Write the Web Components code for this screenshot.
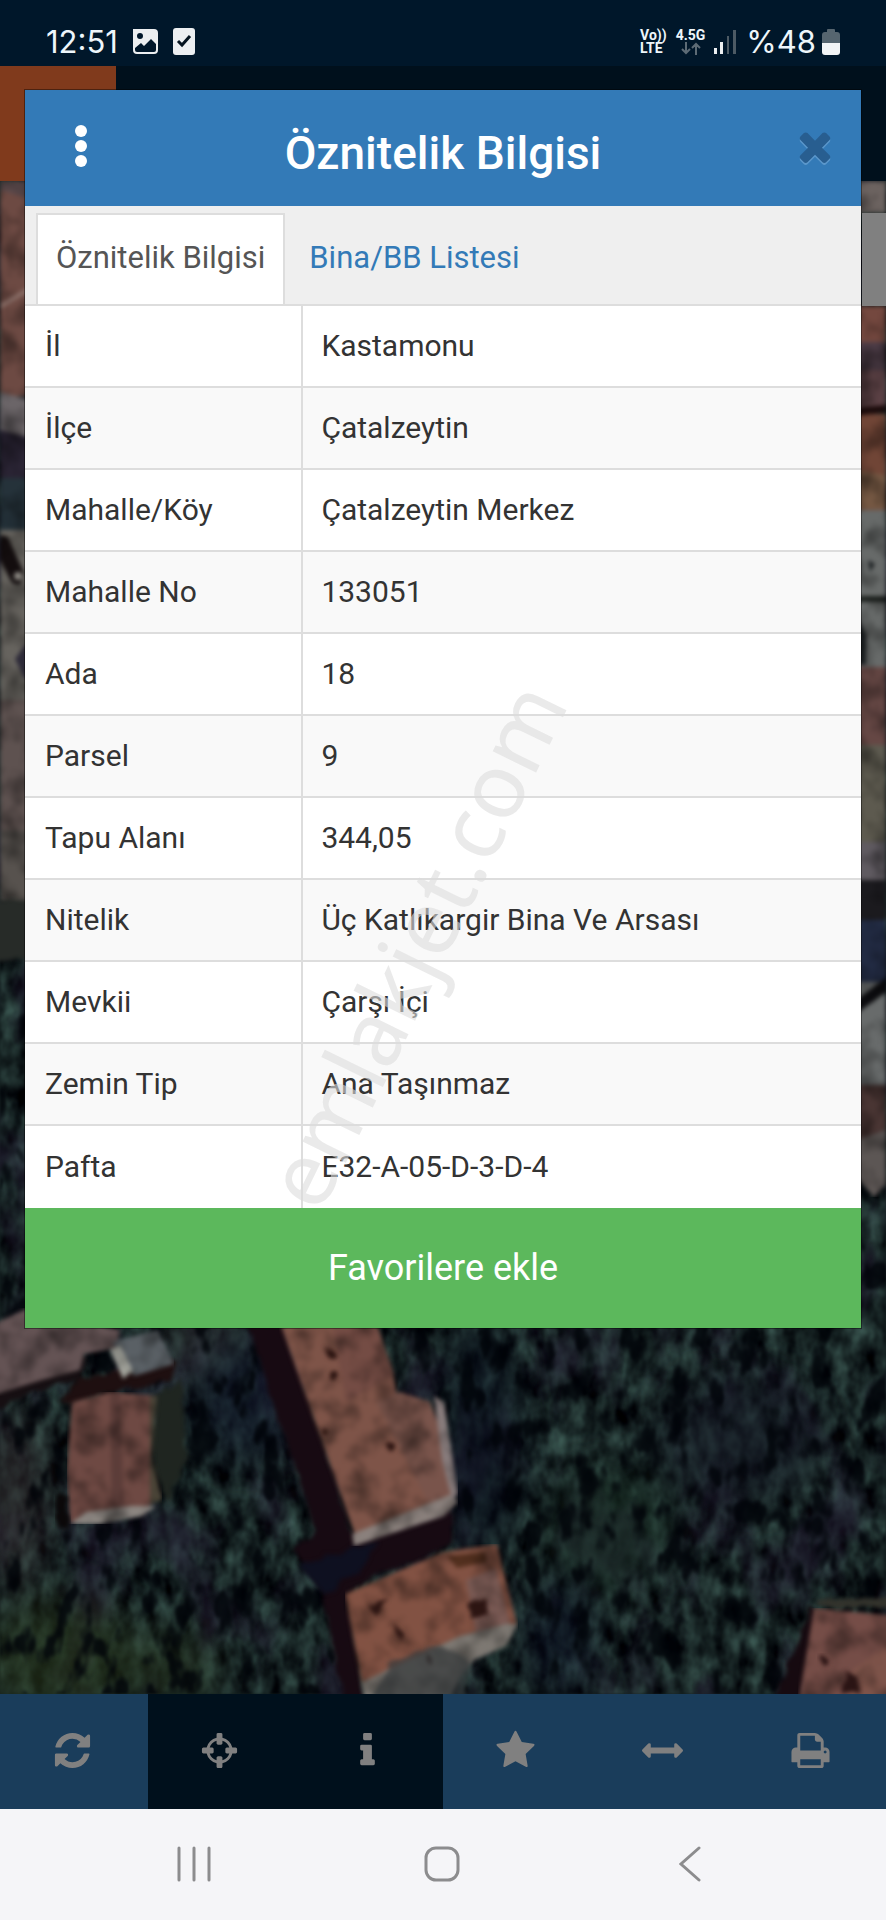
<!DOCTYPE html>
<html lang="tr">
<head>
<meta charset="utf-8">
<meta name="viewport" content="width=device-width, initial-scale=1">
<title>Öznitelik Bilgisi</title>
<style>
  body {
    margin: 0;
    font-family: Roboto, "Liberation Sans", sans-serif;
    background: #00101c;
  }
</style>
</head>
<body>
<parcel-app></parcel-app>

<script>
(function() {
  // 1792 unit glyph grid
  const ICONS = {
    refresh: 'M1639 1056q0 5-1 7-64 268-268 434.5t-478 166.5q-146 0-282.5-55t-243.5-157l-129 129q-19 19-45 19t-45-19-19-45v-448q0-26 19-45t45-19h448q26 0 45 19t19 45-19 45l-137 137q71 66 161 102t187 36q134 0 250-65t186-179q11-17 53-117 8-23 30-23h192q13 0 22.5 9.5t9.5 22.5zm25-800v448q0 26-19 45t-45 19h-448q-26 0-45-19t-19-45 19-45l138-138q-148-137-349-137-134 0-250 65t-186 179q-11 17-53 117-8 23-30 23h-199q-13 0-22.5-9.5t-9.5-22.5v-7q65-268 270-434.5t480-166.5q146 0 284 55.5t245 156.5l130-129q19-19 45-19t45 19 19 45z',
    locate: 'M1325 1024h-109q-26 0-45-19t-19-45v-128q0-26 19-45t45-19h109q-32-108-112.5-188.5t-188.5-112.5v109q0 26-19 45t-45 19h-128q-26 0-45-19t-19-45v-109q-108 32-188.5 112.5t-112.5 188.5h109q26 0 45 19t19 45v128q0 26-19 45t-45 19h-109q32 108 112.5 188.5t188.5 112.5v-109q0-26 19-45t45-19h128q26 0 45 19t19 45v109q108-32 188.5-112.5t112.5-188.5zm339-192v128q0 26-19 45t-45 19h-143q-37 161-154.5 278.5t-278.5 154.5v143q0 26-19 45t-45 19h-128q-26 0-45-19t-19-45v-143q-161-37-278.5-154.5t-154.5-278.5h-143q-26 0-45-19t-19-45v-128q0-26 19-45t45-19h143q37-161 154.5-278.5t278.5-154.5v-143q0-26 19-45t45-19h128q26 0 45 19t19 45v143q161 37 278.5 154.5t154.5 278.5h143q26 0 45 19t19 45z',
    info: 'M1216 1344v128q0 26-19 45t-45 19h-512q-26 0-45-19t-19-45v-128q0-26 19-45t45-19h64v-384h-64q-26 0-45-19t-19-45v-128q0-26 19-45t45-19h384q26 0 45 19t19 45v576h64q26 0 45 19t19 45zm-128-1152v192q0 26-19 45t-45 19h-256q-26 0-45-19t-19-45v-192q0-26 19-45t45-19h256q26 0 45 19t19 45z',
    star: 'M1728 647q0 22-26 48l-363 354 86 500q1 7 1 20 0 21-10.5 35.5t-30.5 14.5q-19 0-40-12l-449-236-449 236q-22 12-40 12-21 0-31.5-14.5t-10.5-35.5q0-6 2-20l86-500-364-354q-25-27-25-48 0-37 56-46l502-73 225-455q19-41 49-41t49 41l225 455 502 73q56 9 56 46z',
    measure: 'M1792 896q0 26-19 45l-256 256q-19 19-45 19t-45-19-19-45v-128h-1024v128q0 26-19 45t-45 19-45-19l-256-256q-19-19-19-45t19-45l256-256q19-19 45-19t45 19 19 45v128h1024v-128q0-26 19-45t45-19 45 19l256 256q19 19 19 45z',
    print: 'M448 1536h896v-256h-896v256zm0-640h896v-384h-160q-40 0-68-28t-28-68v-160h-640v640zm1152 64q0-26-19-45t-45-19-45 19-19 45 19 45 45 19 45-19 19-45zm128 0v416q0 13-9.5 22.5t-22.5 9.5h-224v160q0 40-28 68t-68 28h-960q-40 0-68-28t-28-68v-160h-224q-13 0-22.5-9.5t-9.5-22.5v-416q0-79 56.5-135.5t135.5-56.5h64v-544q0-40 28-68t68-28h672q40 0 88 20t76 48l152 152q28 28 48 76t20 88v256h64q79 0 135.5 56.5t56.5 135.5z',
    times: 'M1490 1322q0 40-28 68l-136 136q-28 28-68 28t-68-28l-294-294-294 294q-28 28-68 28t-68-28l-136-136q-28-28-28-68t28-68l294-294-294-294q-28-28-28-68t28-68l136-136q28-28 68-28t68 28l294 294 294-294q28-28 68-28t68 28l136 136q28 28 28 68t-28 68l-294 294 294 294q28 28 28 68z'
  };

  const ROWS = [
    ['İl', 'Kastamonu'],
    ['İlçe', 'Çatalzeytin'],
    ['Mahalle/Köy', 'Çatalzeytin Merkez'],
    ['Mahalle No', '133051'],
    ['Ada', '18'],
    ['Parsel', '9'],
    ['Tapu Alanı', '344,05'],
    ['Nitelik', 'Üç Katlıkargir Bina Ve Arsası'],
    ['Mevkii', 'Çarşı İçi'],
    ['Zemin Tip', 'Ana Taşınmaz'],
    ['Pafta', 'E32-A-05-D-3-D-4']
  ];

  class BaseElement extends HTMLElement {
    constructor() {
      super();
      this.attachShadow({mode: 'open'});
    }
    connectedCallback() {
      this.shadowRoot.innerHTML = this.template;
    }
  }

  class GlyphIcon extends BaseElement {
    get template() {
      return `
<style>
  :host { display: block; width: 41px; height: 41px; }
  svg { display: block; width: 100%; height: 100%; fill: currentColor; }
</style>
<svg viewBox="0 0 1792 1792" aria-hidden="true"><path d="${ICONS[this.getAttribute('name')]}"/></svg>`
    }
  }
  customElements.define('glyph-icon', GlyphIcon);

  class StatusBar extends BaseElement {
    get template() {
      return `
<style>
  :host {
    display: flex;
    align-items: center;
    box-sizing: border-box;
    height: 66px;
    padding: 18px 46px 0 46px;
    background: #00172a;
    color: #eef6fb;
  }
  .clock, .level { font: 400 31px/36px Inter, Roboto, sans-serif; }
  .clock { margin-right: 14px; }
  svg { display: block; }
  .spacer { flex: 1; }
  .net { font-size: 14px; line-height: 13px; font-weight: 700; margin-right: 9px; }
  .net svg { margin: 0 auto; }
  .signal { margin-right: 10px; }
  .level { margin-right: 6px; }
</style>
<span class="clock">12:51</span>
<svg width="64" height="28" viewBox="0 0 64 28" fill="#eceff1">
  <path fill-rule="evenodd" d="M4 1h18a4 4 0 0 1 4 4v17a4 4 0 0 1-4 4H5a4 4 0 0 1-4-4V1zM8 5a3 3 0 1 0 0 6 3 3 0 0 0 0-6zM3 20v2q0 2 2 2h17q2 0 2-2v-6l-5-5-7 7-3-3z"/>
  <rect x="41" y="0" width="22" height="27" rx="3"/>
  <path d="M46 13l4 4 8-9" fill="none" stroke="#04131f" stroke-width="3"/>
</svg>
<span class="spacer"></span>
<div class="net">Vo))<br>LTE</div>
<div class="net">4.5G
  <svg width="20" height="13" viewBox="0 0 20 13" fill="none" stroke="#5d6b75" stroke-width="2">
    <path d="M5 0v11M1 7l4 4 4-4M15 13V2M11 6l4-4 4 4"/>
  </svg>
</div>
<svg class="signal" width="22" height="24" viewBox="0 0 22 24">
  <path d="M0 18h3v6H0zM6 12h3v12H6z" fill="#eceff1"/>
  <path d="M13 6h2v18h-2zM19 0h3v24h-3z" fill="#4c5a64"/>
</svg>
<span class="level">%48</span>
<svg width="18" height="26" viewBox="0 0 18 26">
  <path d="M5 3V1q0-1 1-1h6q1 0 1 1v2h2q3 0 3 3v9H0V6q0-3 3-3z" fill="#56656f"/>
  <path d="M0 14h18v9q0 3-3 3H3q-3 0-3-3z" fill="#f2f4f5"/>
</svg>`
    }
  }
  customElements.define('status-bar', StatusBar);

  // Noise is read from the alpha channel: the colour channels are premultiplied and come out garish
  class AerialMap extends BaseElement {
    get template() {
      return `
<style>
  :host { display: block; contain: size; overflow: hidden; background: #141f20; }
  svg { display: block; width: 100%; height: 100%; }
  filter { color-interpolation-filters: sRGB; }
</style>
<svg viewBox="0 181 886 1513" preserveAspectRatio="xMidYMid slice" aria-hidden="true">
  <defs>
    <filter id="leaves" x="0" y="0" width="100%" height="100%">
      <feTurbulence type="fractalNoise" baseFrequency="0.06 0.035" numOctaves="4" seed="11"/>
      <feColorMatrix values="0 0 0 0.36 -0.09  0 0 0 0.52 -0.12  0 0 0 0.46 -0.09  0 0 0 0 1"/>
      <feGaussianBlur stdDeviation="1"/>
    </filter>
    <filter id="tint" x="0" y="0" width="100%" height="100%">
      <feTurbulence type="fractalNoise" baseFrequency="0.016 0.01" numOctaves="4" seed="21"/>
      <feColorMatrix values="0 0 0 0 0.15  0 0 0 0 0.12  0 0 0 0 0.21  0 0 0 4 -1.9"/>
    </filter>
    <filter id="holes" x="0" y="0" width="100%" height="100%">
      <feTurbulence type="fractalNoise" baseFrequency="0.042 0.024" numOctaves="3" seed="5"/>
      <feColorMatrix values="0 0 0 0 0  0 0 0 0 0.01  0 0 0 0 0.03  0 0 0 6 -3.2"/>
      <feGaussianBlur stdDeviation="1"/>
    </filter>
    <filter id="grain" x="0" y="0" width="100%" height="100%">
      <feTurbulence type="fractalNoise" baseFrequency="0.04" numOctaves="3" seed="3"/>
      <feColorMatrix values="0 0 0 0 0  0 0 0 0 0  0 0 0 0 0  0 0 0 1 -0.42"/>
      <feComposite in2="SourceGraphic" operator="in" result="n"/>
      <feMerge><feMergeNode in="SourceGraphic"/><feMergeNode in="n"/></feMerge>
      <feGaussianBlur stdDeviation="2"/>
    </filter>
    <filter id="rough" x="-10%" y="-10%" width="120%" height="120%">
      <feTurbulence type="fractalNoise" baseFrequency="0.06" numOctaves="2" seed="8" result="n"/>
      <feDisplacementMap in="SourceGraphic" in2="n" scale="10" xChannelSelector="A" yChannelSelector="A"/>
      <feGaussianBlur stdDeviation="2"/>
    </filter>
    <filter id="haze" x="-50%" y="-50%" width="200%" height="200%"><feGaussianBlur stdDeviation="20"/></filter>
  </defs>

  <rect y="181" width="886" height="1513" filter="url(#leaves)"/>
  <rect y="181" width="886" height="1513" filter="url(#tint)" opacity="0.5"/>
  <g filter="url(#haze)" opacity="0.6">
    <ellipse cx="60" cy="1660" rx="80" ry="60" fill="#2b3b1f"/>
    <ellipse cx="175" cy="1670" rx="40" ry="40" fill="#2a3a22"/>
    <ellipse cx="15" cy="1500" rx="30" ry="90" fill="#352d30"/>
    <ellipse cx="205" cy="1345" rx="50" ry="30" fill="#3c4242"/>
    <ellipse cx="245" cy="1400" rx="50" ry="60" fill="#10162a"/>
    <ellipse cx="610" cy="1530" rx="60" ry="60" fill="#1b3226"/>
    <ellipse cx="480" cy="1440" rx="40" ry="120" fill="#080e1c"/>
    <ellipse cx="740" cy="1440" rx="80" ry="60" fill="#161a26"/>
    <ellipse cx="560" cy="1640" rx="30" ry="60" fill="#0c1226"/>
  </g>
  <rect y="181" width="886" height="1513" filter="url(#holes)" opacity="0.8"/>

  <!-- west edge -->
  <g filter="url(#grain)">
    <path d="M0 181h30v215H0z" fill="#6d4a43"/>
    <path d="M0 181h30v18L0 190z" fill="#5c4a4c"/>
    <path d="M0 304l30-18v5L0 309z" fill="#8a6f68"/>
    <path d="M0 392l30 8v38H0z" fill="#6b6568"/>
    <path d="M0 430l30 8v45H0z" fill="#2a2434"/>
    <path d="M0 478h30v60H0z" fill="#25323a"/>
    <path d="M0 530h30v250H0z" fill="#66635e"/>
    <path d="M0 535l8 2 16 36-4 12-8-2L0 560z" fill="#130d0e"/>
    <circle cx="18" cy="576" r="4" fill="#8d8a84"/>
    <path d="M25 645l-10 14 10 20h5v-34z" fill="#2d2a38"/>
    <path d="M0 700h30v135H0z" fill="#5e5250"/>
    <path d="M0 830h30v78l-30-6z" fill="#57524e"/>
  </g>
  <path d="M-20 900h60v60h-60z" fill="#272b28" filter="url(#rough)"/>

  <!-- east edge -->
  <g filter="url(#grain)">
    <path d="M856 181h30v32h-30z" fill="#6c6360"/>
    <path d="M856 306h30v36h-30z" fill="#74483f"/>
    <path d="M856 342h30v30h-30z" fill="#4b3b45"/>
    <path d="M856 370h30v40h-30z" fill="#5a4044"/>
    <path d="M856 414h30v98h-30z" fill="#704536"/>
    <path d="M856 408l30-3v7l-30 4z" fill="#1c0c0c"/>
    <path d="M856 470l30 5v34h-30z" fill="#755843"/>
    <path d="M856 510h30v158h-30z" fill="#676a69"/>
    <path d="M856 596h30v6h-30z" fill="#1e221f"/>
    <path d="M856 615l10 20v30h-10zM868 560l7 4-5 8z" fill="#1c2022"/>
    <path d="M856 667h30v78h-30z" fill="#654744"/>
    <path d="M856 745h30v100h-30z" fill="#5d5a4f"/>
    <path d="M856 842h30v40h-30z" fill="#5f5a60"/>
    <path d="M856 880h30v42h-30z" fill="#1b1a1e"/>
    <path d="M856 920h30v65h-30z" fill="#222b43"/>
    <path d="M856 982h30v105h-30z" fill="#686b6b"/>
    <path d="M856 1000l30-22v14l-30 22z" fill="#0d0d10"/>
    <path d="M856 1085h30v55h-30z" fill="#493533"/>
    <path d="M856 1140l30-10v55l-12 12-18-20z" fill="#5c5654"/>
  </g>
  <path d="M862 213h24v93h-24z" fill="#808080"/>

  <!-- north west roofs -->
  <g filter="url(#rough)">
    <path d="M-10 1340l70 8 28 10-8 22-45 10-45 24z" fill="#160f12"/>
    <path d="M60 1404l20-26 96-18-6 20-92 22z" fill="#1e0f10"/>
  </g>
  <g filter="url(#grain)">
    <path d="M-10 1326l38-18 92 22-4 18-32 6-4 16-38 10-52 16z" fill="#645354"/>
    <path d="M112 1342l46-12 16 34-40 12z" fill="#5a6065"/>
    <path d="M110 1350l10-5 13 26-10 8z" fill="#a7a8a0"/>
  </g>
  <path d="M155 1394l26-16 6 80-20 44-14-40z" fill="#1f2520" filter="url(#rough)"/>
  <g filter="url(#grain)">
    <path d="M72 1402l38-10 46 4-6 62 12 40-22 12-70 12-3-52z" fill="#6e4943"/>
    <path d="M110 1392h10l4 118-12 2z" fill="#5c3d39"/>
    <path d="M150 1396h7l-5 60 10 44-12 4z" fill="#4a4437"/>
    <path d="M70 1524l16-12 44-6 26 0-14 10-42 8z" fill="#8b8580"/>
  </g>
  <path d="M57 1495h10l2 34-12-4z" fill="#0b0809" filter="url(#rough)"/>

  <!-- centre buildings -->
  <path d="M246 1320h36l70 214 100-34v44l-106 46 18 114h-20l-22-114-28-40 22-20z" fill="#170a12" filter="url(#rough)"/>
  <path d="M300 1566l50-18 30-6-22 32-34 20z" fill="#0e1020" filter="url(#rough)"/>
  <g filter="url(#grain)">
    <path d="M279 1320h96l18 53 4 24 32 4 18 46 8 48-100 40z" fill="#7e5448"/>
    <path d="M332 1322h44l18 52-24 14-24 14z" fill="#744c44"/>
    <path d="M376 1402l24-10 30 10 16 44 6 50-22 10z" fill="#79544b"/>
    <path d="M352 1534l100-40 6 8-14 14-90 30z" fill="#8a807c"/>
    <path d="M434 1396l10 6 14 92-6 6-10-40z" fill="#887c7c"/>
  </g>
  <g filter="url(#grain)">
    <path d="M345 1594l98-42 54-8 8 34 12 46-38 20-116 46z" fill="#825243"/>
    <path d="M447 1556l38-4 2 10-30 6z" fill="#53301f"/>
    <path d="M466 1580l30-12 14 56-34 8z" fill="#7a5a54"/>
    <path d="M362 1682l98-46 46-12 12 0-12 22-32 14-12 14-14 26h-84z" fill="#7d7872"/>
  </g>
  <g fill="#2c1512" filter="url(#rough)">
    <circle cx="330" cy="1353" r="4"/>
    <circle cx="335" cy="1377" r="5"/>
    <circle cx="324" cy="1431" r="3"/>
    <circle cx="390" cy="1445" r="4"/>
    <path d="M396 1626l8 8-2 6-6-6zM468 1606l18-8 2 16-16 6zM368 1606l20-8-14 16zM425 1650l8 10-2 6-6-8z"/>
  </g>
  <path d="M390 1660l40-14 26 6 14 10-6 36h-90z" fill="#34383a" opacity="0.7" filter="url(#rough)"/>

  <!-- south east roof -->
  <path d="M811 1608l8 4-16 92h-32z" fill="#160a10" filter="url(#rough)"/>
  <path d="M818 1600l78-4v14l-78-4z" fill="#33332c" filter="url(#rough)"/>
  <g filter="url(#grain)">
    <path d="M814 1608l82 8v88h-98z" fill="#754d47"/>
    <path d="M852 1670l44-30v64h-50z" fill="#7d5349"/>
  </g>
  <path d="M822 1657l6 2-2 6-5-2zM846 1670l10 6 4 18h-18z" fill="#2a1414" filter="url(#rough)"/>
</svg>`
    }
  }
  customElements.define('aerial-map', AerialMap);

  class InfoDialog extends BaseElement {
    get template() {
      return `
<style>
  :host {
    display: block;
    border: 1px solid rgba(0,0,0,0.4);
    background: #fff;
    background-clip: padding-box;
  }
  header {
    display: grid;
    grid-template-columns: 112px 1fr 112px;
    align-items: center;
    height: 116px;
    background: #337ab7;
    color: #fff;
  }
  h2 {
    margin: 0;
    padding-top: 10px;
    font-size: 46px;
    line-height: 52px;
    font-weight: 500;
    text-align: center;
    white-space: nowrap;
  }
  button {
    display: grid;
    place-items: center;
    padding: 0 0 4px 0;
    border: 0;
    background: none;
    font: inherit;
    color: inherit;
    height: 100%;
  }
  .close { padding-left: 20px; color: #285e90; }
  .close glyph-icon { width: 46px; height: 46px; filter: drop-shadow(0 2px 0 #5b97cb); }
</style>
<header>
  <button class="menu" aria-label="Menü">
    <svg width="12" height="42" viewBox="0 0 12 42" fill="#fff">
      <circle cx="6" cy="6" r="6"/><circle cx="6" cy="21" r="6"/><circle cx="6" cy="36" r="6"/>
    </svg>
  </button>
  <h2>Öznitelik Bilgisi</h2>
  <button class="close" aria-label="Kapat"><glyph-icon name="times"></glyph-icon></button>
</header>
<slot></slot>`
    }
  }
  customElements.define('info-dialog', InfoDialog);

  class TabStrip extends BaseElement {
    get template() {
      return `
<style>
  :host {
    display: flex;
    align-items: stretch;
    box-sizing: border-box;
    height: 100px;
    padding: 7px 11px 0 11px;
    background: #efefef;
    border-bottom: 2px solid #ddd;
  }
  button {
    margin: 0 4px 0 0;
    padding: 0 18px 4px 18px;
    border: 2px solid transparent;
    border-bottom: 0;
    background: none;
    font: 400 31px/40px Roboto, sans-serif;
    color: #337ab7;
  }
  button[aria-selected=true] {
    background: #fff;
    border-color: #ddd;
    color: #555;
  }
</style>
<button role="tab" aria-selected="true">Öznitelik Bilgisi</button>
<button role="tab" aria-selected="false">Bina/BB Listesi</button>`
    }
  }
  customElements.define('tab-strip', TabStrip);

  class AttributeTable extends BaseElement {
    get template() {
      const rows = ROWS.map(r => `<tr><th scope="row">${r[0]}</th><td>${r[1]}</td></tr>`).join('');
      return `
<style>
  :host { display: block; }
  table {
    width: 100%;
    border-collapse: separate;
    border-spacing: 0;
    table-layout: fixed;
    font-size: 30px;
    line-height: 40px;
    color: #333;
  }
  th, td {
    box-sizing: border-box;
    height: 82px;
    padding: 0 18px 0 20px;
    text-align: left;
    font-weight: 400;
    border-bottom: 2px solid #ddd;
  }
  td { padding-left: 18px; }
  th { width: 33.3%; border-right: 2px solid #ddd; }
  tr:nth-child(even) { background: #f9f9f9; }
  tr:last-child > * { border-bottom: 0; }
</style>
<table>${rows}</table>`
    }
  }
  customElements.define('attribute-table', AttributeTable);

  class FavoriteButton extends BaseElement {
    get template() {
      return `
<style>
  :host { display: block; }
  button {
    display: block;
    width: 100%;
    height: 120px;
    padding: 0;
    border: 0;
    background: #5cb85c;
    color: #fff;
    font: 400 36px/48px Roboto, sans-serif;
  }
</style>
<button><slot></slot></button>`
    }
  }
  customElements.define('favorite-button', FavoriteButton);

  class ToolBar extends BaseElement {
    get template() {
      return `
<style>
  :host { display: grid; grid-template-columns: repeat(6, 1fr); height: 115px; background: #1a3d5b; }
  button {
    display: grid;
    place-items: center;
    padding: 0 3px 3px 0;
    border: 0;
    background: none;
    color: #808080;
  }
  .on { background: #00101c; }
</style>
<button aria-label="Yenile"><glyph-icon name="refresh"></glyph-icon></button>
<button class="on" aria-label="Konum"><glyph-icon name="locate"></glyph-icon></button>
<button class="on" aria-label="Bilgi"><glyph-icon name="info"></glyph-icon></button>
<button aria-label="Favoriler"><glyph-icon name="star"></glyph-icon></button>
<button aria-label="Ölçüm"><glyph-icon name="measure"></glyph-icon></button>
<button aria-label="Yazdır"><glyph-icon name="print"></glyph-icon></button>`
    }
  }
  customElements.define('tool-bar', ToolBar);

  class SystemNav extends BaseElement {
    get template() {
      return `
<style>
  :host {
    display: grid;
    grid-template-columns: repeat(3, 1fr);
    box-sizing: border-box;
    height: 111px;
    padding: 0 8%;
    background: #f5f5f8;
  }
  button { display: grid; place-items: center; padding: 0 2px 2px 0; border: 0; background: none; }
  svg { fill: none; stroke: #8c8c8e; stroke-width: 3; stroke-linecap: round; }
</style>
<button aria-label="Son uygulamalar">
  <svg width="36" height="36" viewBox="0 0 36 36"><path d="M3 2v32M18 2v32M33 2v32"/></svg>
</button>
<button aria-label="Ana ekran">
  <svg width="36" height="36" viewBox="0 0 36 36"><rect x="2" y="2" width="32" height="32" rx="10"/></svg>
</button>
<button aria-label="Geri">
  <svg width="22" height="36" viewBox="0 0 22 36"><path d="M20 2L2 18l18 16"/></svg>
</button>`
    }
  }
  customElements.define('system-nav', SystemNav);

  class WaterMark extends BaseElement {
    get template() {
      return `
<style>
  :host {
    position: absolute;
    inset: 0;
    display: grid;
    place-items: center;
    padding: 0 58px 32px 0;
    overflow: hidden;
    pointer-events: none;
    font: 400 90px/1 "Noto Sans", "Open Sans", sans-serif;
    color: rgba(220,220,220,0.6);
  }
  span { transform: rotate(-64deg); white-space: nowrap; }
</style>
<span><slot></slot></span>`
    }
  }
  customElements.define('water-mark', WaterMark);

  class ParcelApp extends BaseElement {
    get template() {
      return `
<style>
  :host {
    position: relative;
    display: grid;
    grid-template-columns: 100%;
    grid-template-rows: auto 115px 1fr auto auto;
    min-height: 100vh;
  }
  .brand {
    grid-area: 2 / 1;
    background: linear-gradient(to right, #803a1c 116px, #00101c 116px);
  }
  aerial-map { grid-area: 3 / 1; }
  info-dialog { grid-area: 2 / 1 / 4 / 2; align-self: start; margin: 23px 24px; z-index: 1; }
  tool-bar { grid-row: 4; }
  system-nav { grid-row: 5; }
  water-mark { z-index: 2; }
</style>
<status-bar></status-bar>
<div class="brand"></div>
<aerial-map></aerial-map>
<info-dialog>
  <tab-strip role="tablist"></tab-strip>
  <attribute-table></attribute-table>
  <favorite-button>Favorilere ekle</favorite-button>
</info-dialog>
<tool-bar></tool-bar>
<system-nav></system-nav>
<water-mark>emlakjet.com</water-mark>`
    }
  }
  customElements.define('parcel-app', ParcelApp);
})();
</script>
</body>
</html>
